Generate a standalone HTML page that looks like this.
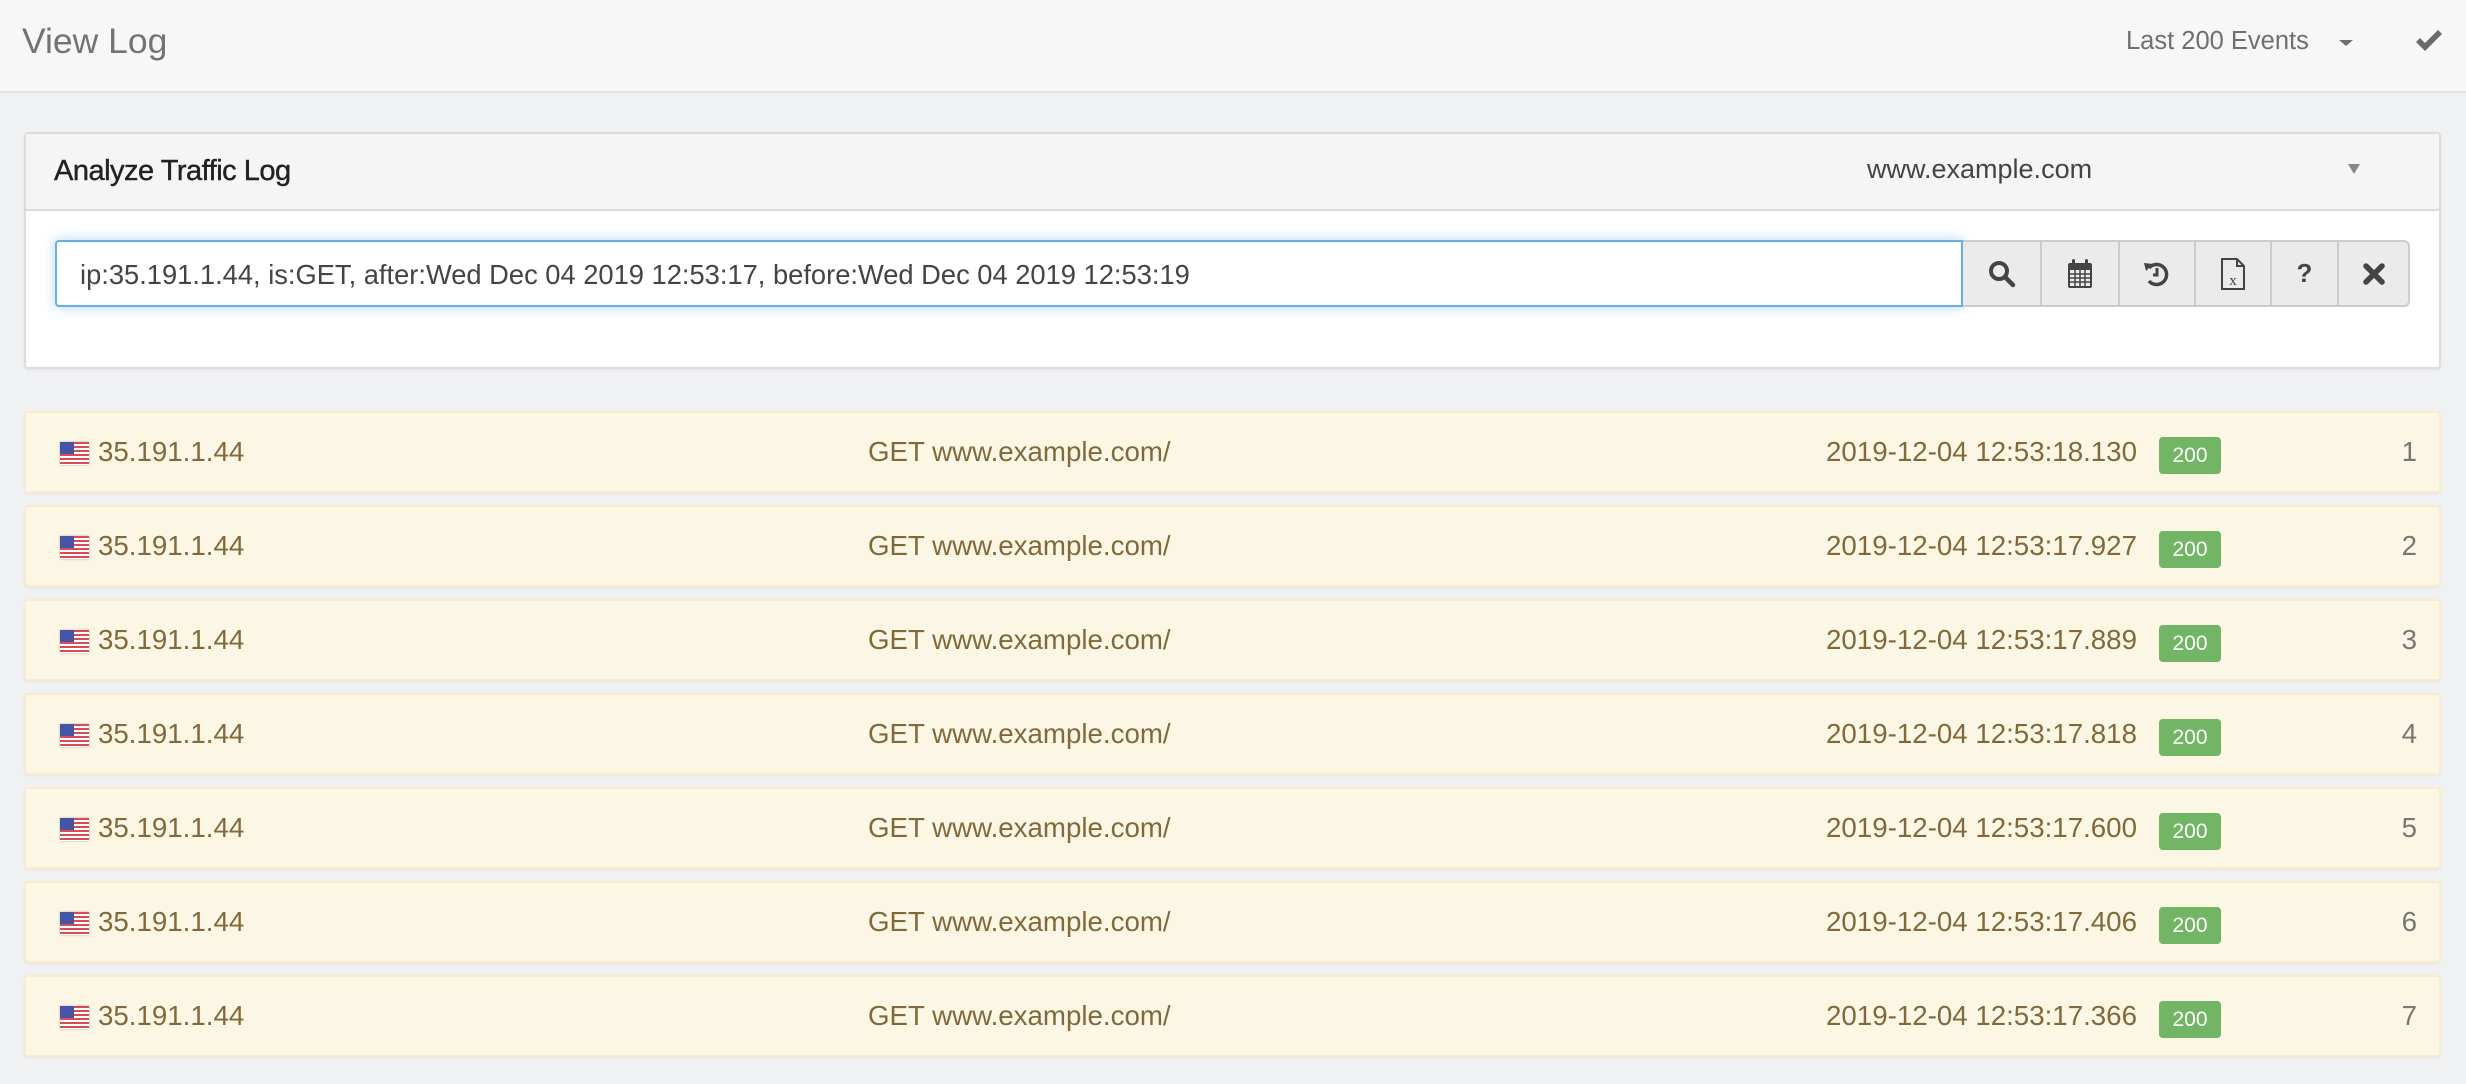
<!DOCTYPE html>
<html><head><meta charset="utf-8"><style>
*{box-sizing:border-box;margin:0;padding:0}
body{width:2466px;height:1084px;overflow:hidden;background:#f0f1f3;font-family:"Liberation Sans",sans-serif;position:relative}
.hdr{position:absolute;left:0;top:0;width:2466px;height:93px;background:#f7f7f7;border-bottom:2px solid #e3e3e3}
.abs{position:absolute;white-space:nowrap}
.panel{position:absolute;left:24px;top:132px;width:2417px;height:237px;background:#fff;border:2px solid #dcdcdc;border-radius:4px;box-shadow:0 1px 2px rgba(0,0,0,.06)}
.ph{position:absolute;left:0;top:0;right:0;height:77px;background:#f5f5f5;border-bottom:2px solid #dcdcdc}
.inp{position:absolute;left:55px;top:240px;width:1908px;height:67px;border:2px solid #66afe9;border-radius:4px 0 0 4px;box-shadow:0 0 12px rgba(102,175,233,.5);background:#fff}
.btns{position:absolute;left:1963px;top:240px;width:447px;height:67px;background:#ebebeb;border:2px solid #ccc;border-left:none;border-radius:0 6px 6px 0}
.b{position:absolute;top:0;height:63px;border-left:2px solid #ccc;display:flex;align-items:center;justify-content:center}
.row{position:absolute;left:24px;width:2417px;height:82px;background:#fcf7e4;border:2px solid #faebcc;border-radius:4px;color:#82683b;font-size:27.7px;box-shadow:0 1px 2px rgba(0,0,0,.05)}
.row span{position:absolute;top:23px;white-space:nowrap}
.flag{position:absolute;left:34px;top:29px;width:29px;height:23px;background:repeating-linear-gradient(#d94b55 0 2px,#fff 2px 4px);box-shadow:0 0 2px rgba(0,0,0,.3)}
.flag:before{content:"";position:absolute;left:0;top:0;width:14px;height:12px;background:#4654a5}
.badge{position:absolute;left:2133px;top:24px;width:62px;height:37px;background:#72b565;border-radius:4px;color:#fff;font-size:21px;text-align:center;line-height:37px}
</style></head><body>
<div class="hdr"></div>
<div class="abs" style="left:22px;top:21px;font-size:35.5px;color:#737373">View Log</div>
<div class="abs" style="left:2126px;top:27px;font-size:25.5px;color:#6f6f6f">Last 200 Events</div>
<div class="abs" style="left:2339px;top:40px;width:0;height:0;border-left:7px solid transparent;border-right:7px solid transparent;border-top:6px solid #6f6f6f"></div>
<svg class="abs" style="left:2414px;top:29px" width="30" height="25" viewBox="0 0 30 25"><path d="M2 13 L6 9 L11 14 L24 1 L28 5 L11 22 Z" fill="#6a6a6a"/></svg>

<div class="panel"><div class="ph"></div></div>
<div class="abs" style="left:54px;top:155px;font-size:29px;color:#222;letter-spacing:-0.5px;-webkit-text-stroke:0.4px #222">Analyze Traffic Log</div>
<div class="abs" style="left:1867px;top:154px;font-size:27px;color:#444">www.example.com</div>
<div class="abs" style="left:2348px;top:164px;width:0;height:0;border-left:6px solid transparent;border-right:6px solid transparent;border-top:10px solid #888"></div>

<div class="inp"></div>
<div class="abs" style="left:80px;top:259px;font-size:27.3px;color:#444">ip:35.191.1.44, is:GET, after:Wed Dec 04 2019 12:53:17, before:Wed Dec 04 2019 12:53:19</div>
<div class="btns">
 <div class="b" style="left:0;width:77px;border-left:none"><svg width="28" height="28" viewBox="0 0 28 28"><circle cx="11" cy="11" r="8" fill="none" stroke="#444" stroke-width="4"/><path d="M17 17 L25 25" stroke="#444" stroke-width="4.5" stroke-linecap="round"/></svg></div>
 <div class="b" style="left:77px;width:78px"><svg width="28" height="32" viewBox="0 0 28 32"><rect x="2" y="5" width="24" height="25" rx="2" fill="#444"/><rect x="4" y="12" width="20" height="16" fill="#ebebeb"/><path d="M4 16H24M4 20H24M4 24H24M9 12V28M14 12V28M19 12V28" stroke="#444" stroke-width="1.5"/><rect x="6" y="1" width="3" height="8" rx="1.5" fill="#444"/><rect x="19" y="1" width="3" height="8" rx="1.5" fill="#444"/></svg></div>
 <div class="b" style="left:155px;width:76px"><svg width="28" height="28" viewBox="0 0 28 28"><path d="M6 8 A10 10 0 1 1 6 21" fill="none" stroke="#444" stroke-width="3.5"/><path d="M1 3 L10 4 L3 11 Z" fill="#444"/><path d="M14 8 V15 H10" fill="none" stroke="#444" stroke-width="3"/></svg></div>
 <div class="b" style="left:231px;width:76px"><svg width="26" height="34" viewBox="0 0 26 34"><path d="M2 2 H17 L24 9 V32 H2 Z" fill="none" stroke="#444" stroke-width="2"/><path d="M17 2 V9 H24" fill="none" stroke="#444" stroke-width="2"/><text x="13" y="28" font-family="Liberation Serif,serif" font-size="15" fill="#444" text-anchor="middle">x</text></svg></div>
 <div class="b" style="left:307px;width:67px;font-size:26px;font-weight:bold;color:#444">?</div>
 <div class="b" style="left:374px;width:71px"><svg width="22" height="22" viewBox="0 0 22 22"><path d="M3 3 L19 19 M19 3 L3 19" stroke="#444" stroke-width="5.5" stroke-linecap="round"/></svg></div>
</div>

<div class="row" style="top:411px"><div class="flag"></div><span style="left:72px">35.191.1.44</span><span style="left:842px">GET www.example.com/</span><span style="left:1800px">2019-12-04 12:53:18.130</span><div class="badge">200</div><span style="right:22px;color:#777">1</span></div>
<div class="row" style="top:505px"><div class="flag"></div><span style="left:72px">35.191.1.44</span><span style="left:842px">GET www.example.com/</span><span style="left:1800px">2019-12-04 12:53:17.927</span><div class="badge">200</div><span style="right:22px;color:#777">2</span></div>
<div class="row" style="top:599px"><div class="flag"></div><span style="left:72px">35.191.1.44</span><span style="left:842px">GET www.example.com/</span><span style="left:1800px">2019-12-04 12:53:17.889</span><div class="badge">200</div><span style="right:22px;color:#777">3</span></div>
<div class="row" style="top:693px"><div class="flag"></div><span style="left:72px">35.191.1.44</span><span style="left:842px">GET www.example.com/</span><span style="left:1800px">2019-12-04 12:53:17.818</span><div class="badge">200</div><span style="right:22px;color:#777">4</span></div>
<div class="row" style="top:787px"><div class="flag"></div><span style="left:72px">35.191.1.44</span><span style="left:842px">GET www.example.com/</span><span style="left:1800px">2019-12-04 12:53:17.600</span><div class="badge">200</div><span style="right:22px;color:#777">5</span></div>
<div class="row" style="top:881px"><div class="flag"></div><span style="left:72px">35.191.1.44</span><span style="left:842px">GET www.example.com/</span><span style="left:1800px">2019-12-04 12:53:17.406</span><div class="badge">200</div><span style="right:22px;color:#777">6</span></div>
<div class="row" style="top:975px"><div class="flag"></div><span style="left:72px">35.191.1.44</span><span style="left:842px">GET www.example.com/</span><span style="left:1800px">2019-12-04 12:53:17.366</span><div class="badge">200</div><span style="right:22px;color:#777">7</span></div>
</body></html>
